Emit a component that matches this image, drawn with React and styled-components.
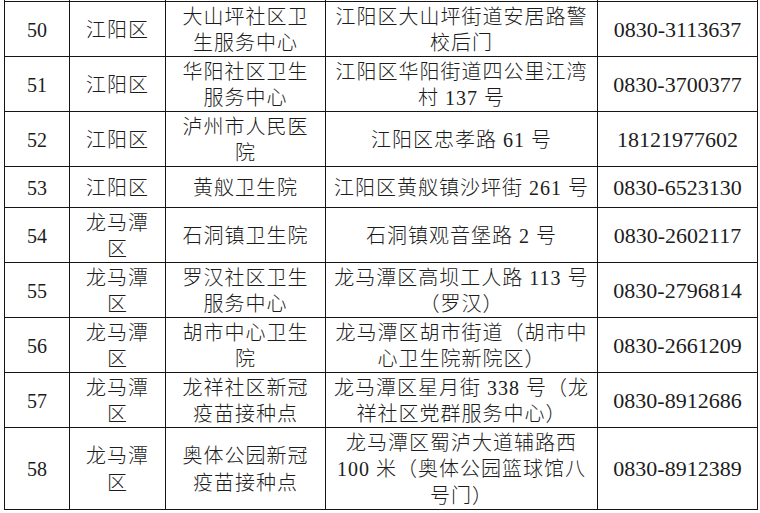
import React from "react";
import styled, { createGlobalStyle } from "styled-components";

const Global = createGlobalStyle`
  html, body { margin: 0; padding: 0; background: #fff; }
  body { width: 760px; height: 513px; overflow: hidden; }
`;

const Page = styled.div`
  padding-left: 4px;
  background: #fff;
`;

const Table = styled.div`
  width: 754px;
  display: flex;
  flex-direction: column;
  gap: 1px;
  background: #151515;
  padding: 0 1px 1px 1px;
  box-sizing: border-box;
`;

const Row = styled.div`
  display: grid;
  grid-template-columns: 64px 95px 159px 271px 159px;
  gap: 1px;
  height: ${(p) => p.$h}px;
`;

const Cell = styled.div`
  background: #fff;
  display: flex;
  align-items: center;
  justify-content: center;
  text-align: center;
  color: #1c1c1c;
  font-family: "Liberation Serif", "Noto Sans CJK SC", serif;
  font-weight: 300;
  font-size: ${(p) => (p.$kind === "phone" ? 22 : 20)}px;
  letter-spacing: ${(p) => (p.$kind === "phone" || p.$kind === "num" ? 0 : 1)}px;
  line-height: 26.5px;
  padding-top: ${(p) => (p.$stub ? 0 : 2)}px;
  box-sizing: border-box;
  overflow: hidden;
  white-space: nowrap;
`;

const Lines = styled.div`
  display: flex;
  flex-direction: column;
  align-items: center;
`;

const rows = [
  { n: "50", d: ["江阳区"], name: ["大山坪社区卫", "生服务中心"], addr: ["江阳区大山坪街道安居路警", "校后门"], tel: "0830-3113637", h: 54 },
  { n: "51", d: ["江阳区"], name: ["华阳社区卫生", "服务中心"], addr: ["江阳区华阳街道四公里江湾", "村 137 号"], tel: "0830-3700377", h: 54 },
  { n: "52", d: ["江阳区"], name: ["泸州市人民医", "院"], addr: ["江阳区忠孝路 61 号"], tel: "18121977602", h: 54 },
  { n: "53", d: ["江阳区"], name: ["黄舣卫生院"], addr: ["江阳区黄舣镇沙坪街 261 号"], tel: "0830-6523130", h: 40 },
  { n: "54", d: ["龙马潭", "区"], name: ["石洞镇卫生院"], addr: ["石洞镇观音堡路 2 号"], tel: "0830-2602117", h: 54 },
  { n: "55", d: ["龙马潭", "区"], name: ["罗汉社区卫生", "服务中心"], addr: ["龙马潭区高坝工人路 113 号", "（罗汉）"], tel: "0830-2796814", h: 54 },
  { n: "56", d: ["龙马潭", "区"], name: ["胡市中心卫生", "院"], addr: ["龙马潭区胡市街道（胡市中", "心卫生院新院区）"], tel: "0830-2661209", h: 54 },
  { n: "57", d: ["龙马潭", "区"], name: ["龙祥社区新冠", "疫苗接种点"], addr: ["龙马潭区星月街 338 号（龙", "祥社区党群服务中心）"], tel: "0830-8912686", h: 54 },
  { n: "58", d: ["龙马潭", "区"], name: ["奥体公园新冠", "疫苗接种点"], addr: ["龙马潭区蜀泸大道辅路西", "100 米（奥体公园篮球馆八", "号门）"], tel: "0830-8912389", h: 81 },
];

const Multi = ({ lines }) => (
  <Lines>
    {lines.map((l, i) => (
      <span key={i}>{l}</span>
    ))}
  </Lines>
);

export default function App() {
  return (
    <>
      <Global />
      <Page>
        <Table>
          <Row $h={1}>
            {[0, 1, 2, 3, 4].map((i) => (
              <Cell key={i} $stub />
            ))}
          </Row>
          {rows.map((r) => (
            <Row key={r.n} $h={r.h}>
              <Cell $kind="num">{r.n}</Cell>
              <Cell><Multi lines={r.d} /></Cell>
              <Cell><Multi lines={r.name} /></Cell>
              <Cell><Multi lines={r.addr} /></Cell>
              <Cell $kind="phone">{r.tel}</Cell>
            </Row>
          ))}
        </Table>
      </Page>
    </>
  );
}
